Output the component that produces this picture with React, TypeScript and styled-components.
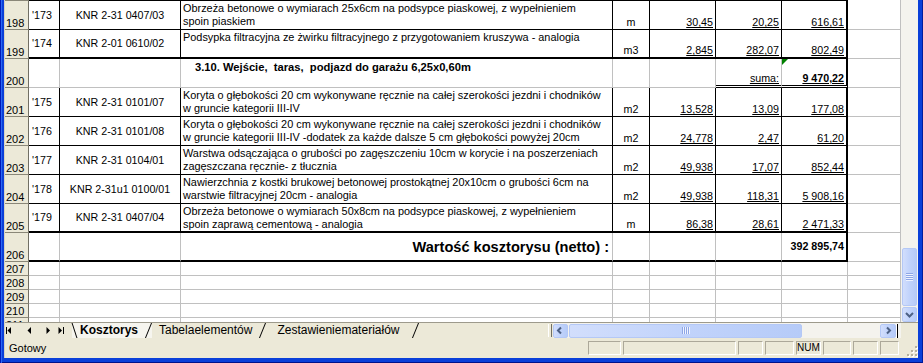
import * as React from 'react';
import styled, { createGlobalStyle } from 'styled-components';

type Edge = 'none' | 'grid' | 'thin' | 'thick' | 'double';

const EDGE: Record<Edge, string> = {
  none: '0',
  grid: '1px solid #c0c0c0',
  thin: '1px solid #000',
  thick: '2px solid #000',
  double: '3px double #000',
};

type ItemData = {
  kind: 'item';
  n: number;
  lp: string;
  code: string;
  lines: string[];
  unit: string;
  qty: string;
  price: string;
  value: string;
  first?: boolean;
  last?: boolean;
};

type SectionData = { kind: 'section'; n: number; title: string; label: string; value: string };
type TotalData = { kind: 'total'; n: number; title: string; value: string };
type EmptyData = { kind: 'empty'; n: number };
type SheetRow = ItemData | SectionData | TotalData | EmptyData;

const rows: SheetRow[] = [
  {
    kind: 'item',
    n: 198,
    first: true,
    lp: "'173",
    code: 'KNR 2-31 0407/03',
    lines: ['Obrzeża betonowe o wymiarach 25x6cm na podsypce piaskowej, z wypełnieniem', 'spoin piaskiem'],
    unit: 'm',
    qty: '30,45',
    price: '20,25',
    value: '616,61',
  },
  {
    kind: 'item',
    n: 199,
    last: true,
    lp: "'174",
    code: 'KNR 2-01 0610/02',
    lines: ['Podsypka filtracyjna ze żwirku filtracyjnego z przygotowaniem kruszywa - analogia'],
    unit: 'm3',
    qty: '2,845',
    price: '282,07',
    value: '802,49',
  },
  { kind: 'section', n: 200, title: '3.10. Wejście,  taras,  podjazd do garażu 6,25x0,60m', label: 'suma:', value: '9 470,22' },
  {
    kind: 'item',
    n: 201,
    lp: "'175",
    code: 'KNR 2-31 0101/07',
    lines: ['Koryta o głębokości 20 cm wykonywane ręcznie na całej szerokości jezdni i chodników', 'w gruncie kategorii III-IV'],
    unit: 'm2',
    qty: '13,528',
    price: '13,09',
    value: '177,08',
  },
  {
    kind: 'item',
    n: 202,
    lp: "'176",
    code: 'KNR 2-31 0101/08',
    lines: [
      'Koryta o głębokości 20 cm wykonywane ręcznie na całej szerokości jezdni i chodników',
      'w gruncie kategorii III-IV -dodatek za każde dalsze 5 cm głębokości powyżej 20cm',
    ],
    unit: 'm2',
    qty: '24,778',
    price: '2,47',
    value: '61,20',
  },
  {
    kind: 'item',
    n: 203,
    lp: "'177",
    code: 'KNR 2-31 0104/01',
    lines: ['Warstwa odsączająca o grubości po zagęszczeniu 10cm w korycie i na poszerzeniach', 'zagęszczana ręcznie- z tłucznia'],
    unit: 'm2',
    qty: '49,938',
    price: '17,07',
    value: '852,44',
  },
  {
    kind: 'item',
    n: 204,
    lp: "'178",
    code: 'KNR 2-31u1 0100/01',
    lines: ['Nawierzchnia z kostki brukowej betonowej prostokątnej 20x10cm o grubości 6cm na', 'warstwie filtracyjnej 20cm - analogia'],
    unit: 'm2',
    qty: '49,938',
    price: '118,31',
    value: '5 908,16',
  },
  {
    kind: 'item',
    n: 205,
    last: true,
    lp: "'179",
    code: 'KNR 2-31 0407/04',
    lines: ['Obrzeża betonowe o wymiarach 50x8cm na podsypce piaskowej, z wypełnieniem', 'spoin zaprawą cementową - analogia'],
    unit: 'm',
    qty: '86,38',
    price: '28,61',
    value: '2 471,33',
  },
  { kind: 'total', n: 206, title: 'Wartość kosztorysu (netto) :', value: '392 895,74' },
  { kind: 'empty', n: 207 },
  { kind: 'empty', n: 208 },
  { kind: 'empty', n: 209 },
  { kind: 'empty', n: 210 },
  { kind: 'empty', n: 211 },
];

const statusPanels = [
  { w: 33 },
  { w: 113 },
  { w: 25 },
  { w: 29 },
  { w: 25, text: 'NUM' },
  { w: 28 },
  { w: 25 },
  { w: 19 },
];

const App: React.FC = () => {
  return (
    <>
      <GlobalStyle />
      <Window>
        <Body>
          <Main>
            <Sheet>
              {rows.map((row) => {
                switch (row.kind) {
                  case 'item':
                    return <ItemRow key={row.n} row={row} />;
                  case 'section':
                    return <SectionRow key={row.n} row={row} />;
                  case 'total':
                    return <TotalRow key={row.n} row={row} />;
                  default:
                    return <EmptyRow key={row.n} n={row.n} />;
                }
              })}
            </Sheet>

            <VScroll>
              <VTrack />
              <VThumb>
                <Grip $vertical />
              </VThumb>
              <ScrollButton $w={15} $h={15}>
                <Chevron dir="down" />
              </ScrollButton>
            </VScroll>
          </Main>

          <TabRow>
            <TabNav>
              <svg width="62" height="15" viewBox="0 0 62 15">
                <rect x="1" y="4" width="1" height="7" fill="#000" />
                <polygon points="2.5,7.5 6,4 6,11" fill="#000" />
                <polygon points="22.5,7.5 26,4 26,11" fill="#000" />
                <polygon points="41.5,4 41.5,11 45,7.5" fill="#000" />
                <polygon points="53.5,4 53.5,11 57,7.5" fill="#000" />
                <rect x="58" y="4" width="1" height="7" fill="#000" />
              </svg>
            </TabNav>
            <Tabs>
              <Tab $active>Kosztorys</Tab>
              <Tab>Tabelaelementów</Tab>
              <Tab $wide>Zestawieniemateriałów</Tab>
            </Tabs>
            <Splitter />
            <HScroll>
              <ScrollButton $w={15} $h={14}>
                <Chevron dir="left" />
              </ScrollButton>
              <HThumb>
                <Grip />
              </HThumb>
              <HTrack />
              <ScrollButton $w={16} $h={14}>
                <Chevron dir="right" />
              </ScrollButton>
              <EndSplit />
            </HScroll>
            <Corner />
          </TabRow>

          <StatusBar>
            <StatusText>Gotowy</StatusText>
            <Panels>
              {statusPanels.map((p, i) => (
                <Panel key={i} $w={p.w}>
                  {p.text}
                </Panel>
              ))}
            </Panels>
            <SizeGrip>
              <svg width="12" height="12" viewBox="0 0 12 12">
                {[
                  [9, 1],
                  [9, 5],
                  [5, 5],
                  [9, 9],
                  [5, 9],
                  [1, 9],
                ].map(([x, y]) => (
                  <React.Fragment key={`${x}-${y}`}>
                    <rect x={x + 1} y={y + 1} width="2" height="2" fill="#fff" />
                    <rect x={x} y={y} width="2" height="2" fill="#b4b09f" />
                  </React.Fragment>
                ))}
              </svg>
            </SizeGrip>
          </StatusBar>
        </Body>
      </Window>
    </>
  );
};

const ItemRow: React.FC<{ row: ItemData }> = ({ row }) => {
  const top: Edge = row.first ? 'thin' : 'none';
  const bottom: Edge = row.last ? 'thick' : 'thin';
  return (
    <>
      <RowHead $top={row.first}>{row.n}</RowHead>
      <LpCell $right="thin" $bottom={bottom} $top={top} $v="center">
        {row.lp}
      </LpCell>
      <Cell $right="thin" $bottom={bottom} $top={top} $v="center" $h="center">
        {row.code}
      </Cell>
      <DescCell $right="thin" $bottom={bottom} $top={top} $v="top">
        {row.lines.map((line, i) => (
          <Line key={i}>{line}</Line>
        ))}
      </DescCell>
      <Cell $right="thin" $bottom={bottom} $top={top} $h="center">
        {row.unit}
      </Cell>
      <Cell $right="thin" $bottom={bottom} $top={top} $h="right">
        <Num>{row.qty}</Num>
      </Cell>
      <Cell $right="thin" $bottom={bottom} $top={top} $h="right">
        <Num>{row.price}</Num>
      </Cell>
      <Cell $right="thick" $bottom={bottom} $top={top} $h="right">
        <Num>{row.value}</Num>
      </Cell>
      <Cell />
    </>
  );
};

const SectionRow: React.FC<{ row: SectionData }> = ({ row }) => (
  <>
    <RowHead>{row.n}</RowHead>
    <Cell />
    <Cell />
    <SectionTitle $v="top">{row.title}</SectionTitle>
    <Cell />
    <Cell />
    <Cell $bottom="double" $h="right">
      <Num>{row.label}</Num>
    </Cell>
    <Cell $right="thick" $bottom="double" $h="right">
      <ErrorMark />
      <Num $bold>{row.value}</Num>
    </Cell>
    <Cell />
  </>
);

const TotalRow: React.FC<{ row: TotalData }> = ({ row }) => (
  <>
    <RowHead>{row.n}</RowHead>
    <Cell $bottom="thick" />
    <Cell $bottom="thick" />
    <TotalTitle $bottom="thick" $v="center" $h="right">
      {row.title}
    </TotalTitle>
    <Cell $bottom="thick" />
    <Cell $bottom="thick" />
    <Cell $bottom="thick" />
    <TotalValue $right="thick" $bottom="thick" $v="center" $h="right">
      {row.value}
    </TotalValue>
    <Cell />
  </>
);

const EmptyRow: React.FC<{ n: number }> = ({ n }) => (
  <>
    <RowHead>{n}</RowHead>
    {Array.from({ length: 8 }, (_, i) => (
      <Cell key={i} />
    ))}
  </>
);

const Chevron: React.FC<{ dir: 'left' | 'right' | 'down' }> = ({ dir }) => {
  const points = {
    left: '5,1.5 2,4.5 5,7.5',
    right: '3,1.5 6,4.5 3,7.5',
    down: '1,3 4.5,6.5 8,3',
  }[dir];
  return (
    <svg width="9" height="9" viewBox="0 0 9 9">
      <polyline points={points} fill="none" stroke="#4d6185" strokeWidth="2" />
    </svg>
  );
};

const GlobalStyle = createGlobalStyle`
  html, body {
    margin: 0;
    padding: 0;
    background: #fff;
  }
  body {
    font-family: 'Liberation Sans', Arial, sans-serif;
  }
`;

const Window = styled.div`
  width: 923px;
  height: 363px;
  box-sizing: border-box;
  padding: 0 5px 5px 4px;
  display: flex;
  flex-direction: column;
  overflow: hidden;
  background: #0a3fd9;
  box-shadow: inset 1px 0 #0019b8, inset 2px 0 #2c68f3, inset -1px 0 #001c9e, inset 0 -1px #00128a;
`;

const Body = styled.div`
  flex: 1;
  min-height: 0;
  display: flex;
  flex-direction: column;
  border-left: 1px solid #d6d2c2;
  background: #ece9d8;
`;

const Main = styled.div`
  display: flex;
  height: 322px;
`;

const Sheet = styled.div`
  width: 896px;
  height: 322px;
  overflow: hidden;
  display: grid;
  grid-template-columns: 24px 31px 121px 432px 37px 66px 66px 66px 53px;
  grid-template-rows: 30px repeat(8, 29px) repeat(5, 14px);
  align-content: start;
  background: #fff;
  color: #000;
  font-family: 'Liberation Sans', Arial, sans-serif;
`;

const RowHead = styled.div<{ $top?: boolean }>`
  box-sizing: border-box;
  display: flex;
  align-items: flex-end;
  padding: 0 0 0 1px;
  background: #ece9d8;
  border-right: 1px solid #716f64;
  border-bottom: 1px solid #8a8778;
  border-top: ${({ $top }) => ($top ? '1px solid #8a8778' : '0')};
  font-size: 11px;
  line-height: 12px;
  overflow: hidden;
`;

const VALIGN = { top: 'flex-start', center: 'center', bottom: 'flex-end' };

const Cell = styled.div<{
  $right?: Edge;
  $bottom?: Edge;
  $top?: Edge;
  $h?: 'left' | 'center' | 'right';
  $v?: 'top' | 'center' | 'bottom';
}>`
  position: relative;
  box-sizing: border-box;
  min-width: 0;
  display: flex;
  flex-direction: column;
  justify-content: ${({ $v = 'bottom' }) => VALIGN[$v]};
  text-align: ${({ $h = 'left' }) => $h};
  padding: 0 2px;
  border-right: ${({ $right = 'grid' }) => EDGE[$right]};
  border-bottom: ${({ $bottom = 'grid' }) => EDGE[$bottom]};
  border-top: ${({ $top = 'none' }) => EDGE[$top]};
  font-size: 10.7px;
  line-height: 13px;
  white-space: nowrap;
  background: #fff;
`;

const LpCell = styled(Cell)`
  padding-left: 3px;
`;

const DescCell = styled(Cell)`
  padding-top: 1px;
  font-size: 10.9px;
`;

const Line = styled.span`
  display: block;
`;

const Num = styled.span<{ $bold?: boolean }>`
  text-decoration: underline;
  font-weight: ${({ $bold }) => ($bold ? 700 : 400)};
`;

const SectionTitle = styled(Cell)`
  padding: 2px 0 0 14px;
  font-size: 11.2px;
  font-weight: 700;
  white-space: pre;
`;

const TotalTitle = styled(Cell)`
  padding-right: 3px;
  font-size: 14.6px;
  font-weight: 700;
  line-height: 16px;
`;

const TotalValue = styled(Cell)`
  font-weight: 700;
`;

const ErrorMark = styled.span`
  position: absolute;
  top: 0;
  left: 0;
  width: 0;
  height: 0;
  border-top: 6px solid #008000;
  border-right: 6px solid transparent;
`;

const VScroll = styled.div`
  width: 17px;
  display: flex;
  flex-direction: column;
  align-items: center;
  background: #f4f3ee;
`;

const VTrack = styled.div`
  flex: 1;
`;

const blueFace = `
  box-sizing: border-box;
  border: 1px solid #b4c8f6;
  border-radius: 2px;
  background: linear-gradient(90deg, #d2defc 0%, #c1d3fb 50%, #b6cbf8 100%);
  display: flex;
  align-items: center;
  justify-content: center;
`;

const VThumb = styled.div`
  ${blueFace}
  width: 15px;
  height: 58px;
  margin-bottom: 1px;
`;

const ScrollButton = styled.div<{ $w: number; $h: number }>`
  ${blueFace}
  width: ${({ $w }) => $w}px;
  height: ${({ $h }) => $h}px;
  flex: none;
`;

const Grip = styled.span<{ $vertical?: boolean }>`
  display: block;
  width: ${({ $vertical }) => ($vertical ? '7px' : '8px')};
  height: ${({ $vertical }) => ($vertical ? '8px' : '7px')};
  background: ${({ $vertical }) =>
    $vertical
      ? 'repeating-linear-gradient(180deg, #8ea6e6 0 1px, #eef3ff 1px 2px)'
      : 'repeating-linear-gradient(90deg, #8ea6e6 0 1px, #eef3ff 1px 2px)'};
`;

const TabRow = styled.div`
  display: flex;
  height: 16px;
  box-sizing: border-box;
  border-top: 1px solid #9d9a8c;
  background: #ece9d8;
`;

const TabNav = styled.div`
  width: 67px;
  flex: none;
  display: flex;
  align-items: center;
`;

const Tabs = styled.div`
  flex: 1;
  display: flex;
  align-items: stretch;
  font-family: 'Liberation Sans', Arial, sans-serif;
  font-size: 12px;
  line-height: 15px;
  color: #000;
`;

const Tab = styled.div<{ $active?: boolean; $wide?: boolean }>`
  position: relative;
  padding: 0 ${({ $wide }) => ($wide ? 20 : 14)}px 0 ${({ $active, $wide }) => ($active ? 8 : $wide ? 11 : 7)}px;
  font-weight: ${({ $active }) => ($active ? 700 : 400)};
  background: ${({ $active }) => ($active ? '#f6f5ef' : 'transparent')};

  &::before {
    content: '';
    display: ${({ $active }) => ($active ? 'block' : 'none')};
    position: absolute;
    top: 0;
    left: 2px;
    width: 1px;
    height: 15px;
    background: #000;
    transform: skewX(18deg);
  }

  &::after {
    content: '';
    position: absolute;
    top: 0;
    right: 3px;
    width: 1px;
    height: 15px;
    background: #000;
    transform: skewX(-22deg);
  }
`;

const Splitter = styled.div`
  width: 2px;
  margin: 1px 1px 1px 0;
  border-left: 1px solid #fff;
  border-right: 1px solid #716f64;
  background: #ece9d8;
`;

const HScroll = styled.div`
  width: 348px;
  display: flex;
  align-items: center;
  background: #f4f3ee;
`;

const HThumb = styled.div`
  ${blueFace}
  width: 233px;
  height: 14px;
  margin-left: 1px;
`;

const HTrack = styled.div`
  flex: 1;
`;

const EndSplit = styled.div`
  width: 1px;
  height: 14px;
  margin: 0 3px 0 1px;
  background: #000;
  box-shadow: -1px 0 #fff;
`;

const Corner = styled.div`
  width: 17px;
  background: #ece9d8;
`;

const StatusBar = styled.div`
  height: 20px;
  display: flex;
  align-items: center;
  background: #ece9d8;
  font-family: 'Liberation Sans', Arial, sans-serif;
  color: #000;
`;

const StatusText = styled.span`
  padding-left: 4px;
  font-size: 11px;
`;

const Panels = styled.div`
  margin-left: auto;
  display: flex;
  gap: 2px;
`;

const Panel = styled.div<{ $w: number }>`
  box-sizing: border-box;
  width: ${({ $w }) => $w}px;
  height: 14px;
  border-top: 1px solid #aca899;
  border-left: 1px solid #aca899;
  border-bottom: 1px solid #fff;
  border-right: 1px solid #fff;
  font-size: 10px;
  line-height: 12px;
  text-align: center;
`;

const SizeGrip = styled.div`
  width: 19px;
  height: 20px;
  display: flex;
  align-items: flex-end;
  justify-content: flex-end;
  padding-bottom: 1px;
  box-sizing: border-box;
`;

export default App;
